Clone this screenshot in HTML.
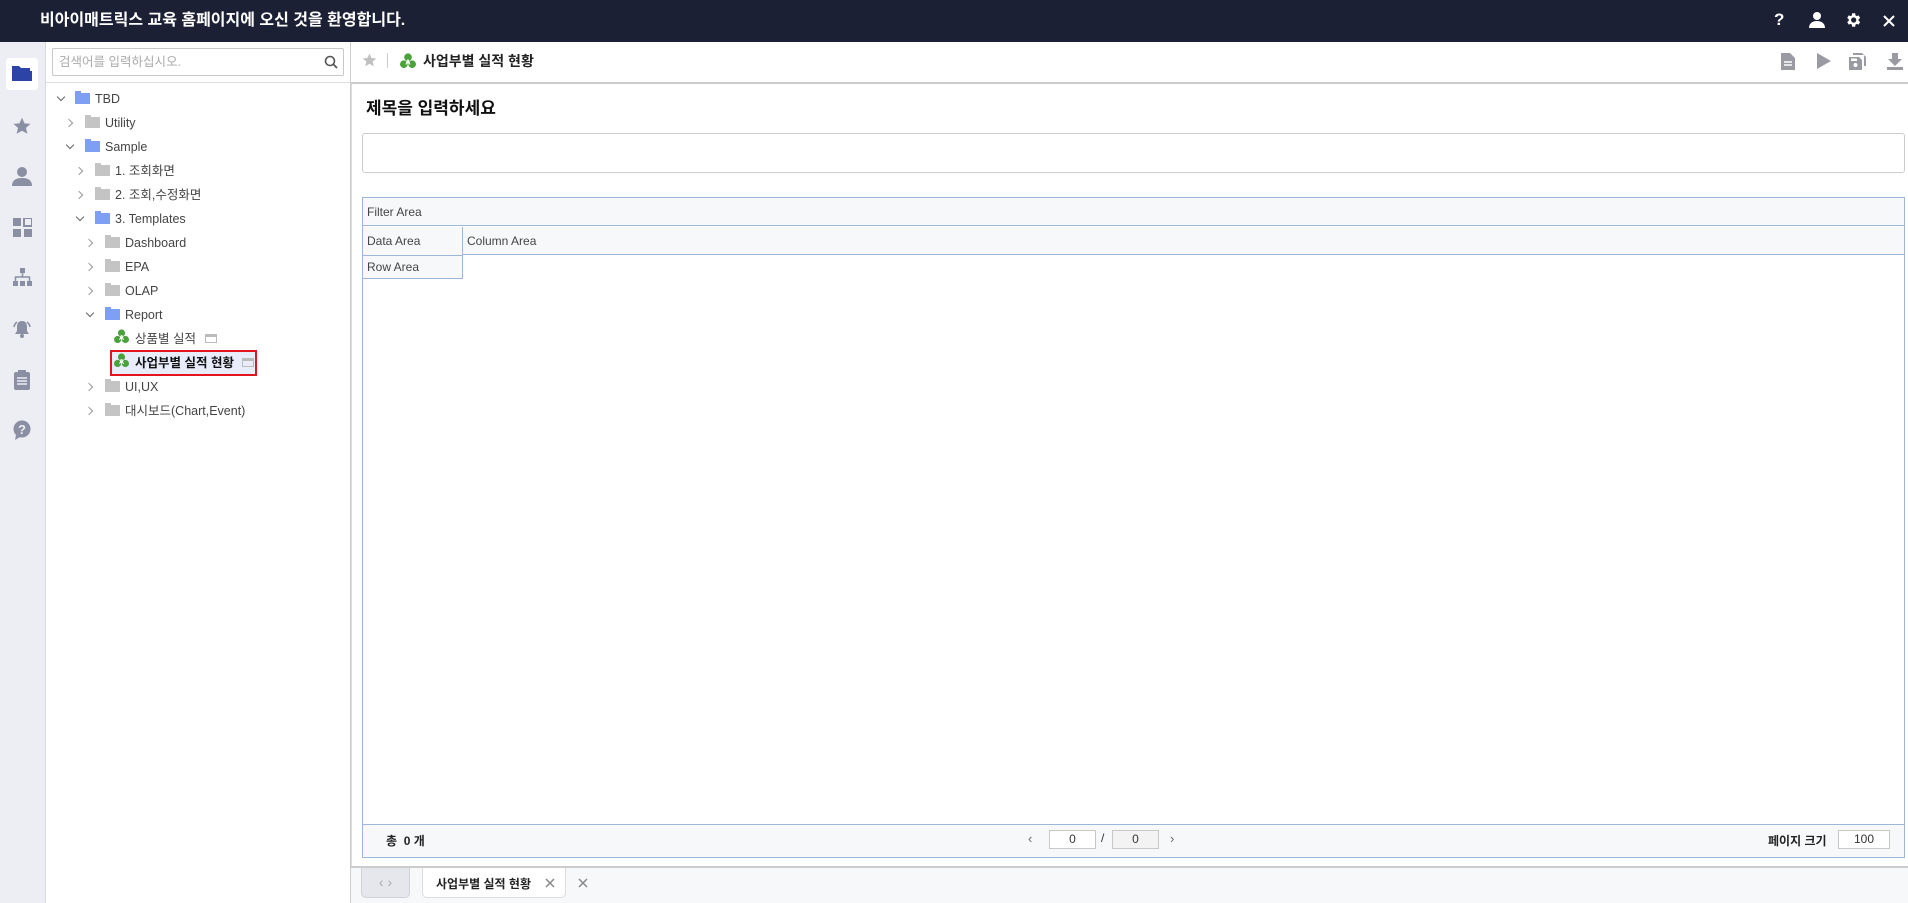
<!DOCTYPE html>
<html><head><meta charset="utf-8"><style>
*{box-sizing:border-box;margin:0;padding:0}
body{width:1908px;height:903px;overflow:hidden;background:#fff;font-family:"Liberation Sans","Noto Sans CJK KR",sans-serif;color:#333;position:relative}
.abs{position:absolute}
#hdr{left:0;top:0;width:1908px;height:42px;background:#1c2035;color:#fff;font-size:16px;font-weight:bold;line-height:42px;padding-left:40px}
#rail{left:0;top:42px;width:46px;height:861px;background:#edeef3;border-right:1px solid #d8d9de}
#tree{left:46px;top:42px;width:305px;height:861px;background:#fff;border-right:1px solid #ccc}
.ti{position:absolute;font-size:12.5px;color:#444;height:24px;line-height:24px;white-space:nowrap}
.arr{position:absolute;width:6px;height:6px;border-right:1.5px solid #666;border-bottom:1.5px solid #666}
.fold{position:absolute;width:15px;height:11px}
.fold:before{content:"";position:absolute;left:0;top:-2px;width:6px;height:3px;background:inherit}
.blue{background:#7f9ff5}.gray{background:#c4c4c4}
</style></head><body>
<div id="hdr" class="abs">비아이매트릭스 교육 홈페이지에 오신 것을 환영합니다.</div>
<div class="abs" style="left:1774px;top:10px;color:#fff;font-weight:bold;font-size:17px">?</div>
<svg class="abs" style="left:1808px;top:11px" width="18" height="18" viewBox="0 0 18 18"><circle cx="9" cy="5" r="4" fill="#fff"/><path d="M1 17c0-5 4-7 8-7s8 2 8 7z" fill="#fff"/></svg>
<svg class="abs" style="left:1844px;top:11px" width="18" height="18" viewBox="0 0 24 24"><path fill="#fff" d="M19.4 13a7.5 7.5 0 000-2l2.1-1.6-2-3.5-2.5 1a7 7 0 00-1.7-1L14.9 3h-4l-.4 2.9a7 7 0 00-1.7 1l-2.5-1-2 3.5L6.4 11a7.5 7.5 0 000 2l-2.1 1.6 2 3.5 2.5-1a7 7 0 001.7 1l.4 2.9h4l.4-2.9a7 7 0 001.7-1l2.5 1 2-3.5zM12.9 15.5a3.5 3.5 0 110-7 3.5 3.5 0 010 7z"/></svg>
<svg class="abs" style="left:1883px;top:15px" width="12" height="12"><path d="M1 1L11 11M11 1L1 11" stroke="#fff" stroke-width="2"/></svg>

<div id="rail" class="abs"></div>
<div class="abs" style="left:6px;top:58px;width:32px;height:32px;background:#fff;border-radius:4px"></div>
<svg class="abs" style="left:12px;top:65px" width="20" height="16" viewBox="0 0 20 16"><path d="M0 1h7l2 2h9v3H0z" fill="#2d43a6"/><path d="M0 6h20v10H0z" fill="#2d43a6"/></svg>
<svg class="abs" style="left:12px;top:117px" width="20" height="19" viewBox="0 0 24 24"><path fill="#8a8fa3" d="M12 1l3.2 7 7.6.7-5.8 5 1.8 7.5L12 17.3 5.2 21.2 7 13.7l-5.8-5 7.6-.7z"/></svg>
<svg class="abs" style="left:12px;top:166px" width="20" height="20" viewBox="0 0 20 20"><circle cx="10" cy="6" r="5" fill="#8a8fa3"/><path d="M0 20c0-6 4-8 10-8s10 2 10 8z" fill="#8a8fa3"/></svg>
<svg class="abs" style="left:13px;top:218px" width="19" height="19" viewBox="0 0 19 19"><rect x="0" y="0" width="8" height="8" fill="#8a8fa3"/><rect x="11" y="0" width="8" height="8" fill="none" stroke="#8a8fa3" stroke-width="2"/><rect x="0" y="11" width="8" height="8" fill="#8a8fa3"/><rect x="11" y="11" width="8" height="8" fill="#8a8fa3"/></svg>
<svg class="abs" style="left:13px;top:268px" width="19" height="18" viewBox="0 0 19 18"><rect x="7" y="0" width="5" height="5" fill="#8a8fa3"/><path d="M9.5 5v4M2.5 13V9h14v4" stroke="#8a8fa3" fill="none" stroke-width="1.5"/><rect x="0" y="13" width="5" height="5" fill="#8a8fa3"/><rect x="7" y="13" width="5" height="5" fill="#8a8fa3"/><rect x="14" y="13" width="5" height="5" fill="#8a8fa3"/></svg>
<svg class="abs" style="left:12px;top:319px" width="20" height="20" viewBox="0 0 20 20"><path d="M10 2c-4 0-5 3-5 6v4l-2 3h14l-2-3V8c0-3-1-6-5-6z" fill="#8a8fa3"/><circle cx="10" cy="17" r="2" fill="#8a8fa3"/><path d="M2 8a8 8 0 013-5M18 8a8 8 0 00-3-5" stroke="#8a8fa3" stroke-width="1.6" fill="none"/></svg>
<svg class="abs" style="left:14px;top:370px" width="16" height="20" viewBox="0 0 16 20"><rect x="0" y="2" width="16" height="18" rx="2" fill="#8a8fa3"/><rect x="4" y="0" width="8" height="4" fill="#8a8fa3"/><path d="M3 8h10M3 11h10M3 14h10" stroke="#edeef3" stroke-width="1.4"/></svg>
<svg class="abs" style="left:12px;top:420px" width="20" height="20" viewBox="0 0 20 20"><circle cx="10" cy="9" r="8.5" fill="#8a8fa3"/><path d="M4 15l-1 5 5-3z" fill="#8a8fa3"/><text x="10" y="14" font-size="13" font-weight="bold" fill="#edeef3" text-anchor="middle" font-family="Liberation Sans">?</text></svg>

<div id="tree" class="abs"></div>
<div class="abs" style="left:52px;top:48px;width:292px;height:28px;border:1px solid #c8c8c8;border-radius:2px;font-size:12.5px;color:#aaa;line-height:26px;padding-left:6px">검색어를 입력하십시오.</div>
<svg class="abs" style="left:324px;top:55px" width="14" height="14"><circle cx="6" cy="6" r="4.5" stroke="#555" stroke-width="1.6" fill="none"/><path d="M9.3 9.3L13 13" stroke="#555" stroke-width="1.8"/></svg>
<div class="abs" style="left:46px;top:82px;width:305px;height:1px;background:#ddd"></div>

<div class="arr abs" style="left:58px;top:94px;transform:rotate(45deg)"></div><div class="fold blue" style="left:75px;top:93px"></div><div class="ti" style="left:95px;top:87px">TBD</div>
<div class="arr abs" style="left:66px;top:120px;transform:rotate(-45deg);border-color:#999"></div><div class="fold gray" style="left:85px;top:117px"></div><div class="ti" style="left:105px;top:111px">Utility</div>
<div class="arr abs" style="left:67px;top:142px;transform:rotate(45deg)"></div><div class="fold blue" style="left:85px;top:141px"></div><div class="ti" style="left:105px;top:135px">Sample</div>
<div class="arr abs" style="left:76px;top:168px;transform:rotate(-45deg);border-color:#999"></div><div class="fold gray" style="left:95px;top:165px"></div><div class="ti" style="left:115px;top:159px">1. 조회화면</div>
<div class="arr abs" style="left:76px;top:192px;transform:rotate(-45deg);border-color:#999"></div><div class="fold gray" style="left:95px;top:189px"></div><div class="ti" style="left:115px;top:183px">2. 조회,수정화면</div>
<div class="arr abs" style="left:77px;top:214px;transform:rotate(45deg)"></div><div class="fold blue" style="left:95px;top:213px"></div><div class="ti" style="left:115px;top:207px">3. Templates</div>
<div class="arr abs" style="left:86px;top:240px;transform:rotate(-45deg);border-color:#999"></div><div class="fold gray" style="left:105px;top:237px"></div><div class="ti" style="left:125px;top:231px">Dashboard</div>
<div class="arr abs" style="left:86px;top:264px;transform:rotate(-45deg);border-color:#999"></div><div class="fold gray" style="left:105px;top:261px"></div><div class="ti" style="left:125px;top:255px">EPA</div>
<div class="arr abs" style="left:86px;top:288px;transform:rotate(-45deg);border-color:#999"></div><div class="fold gray" style="left:105px;top:285px"></div><div class="ti" style="left:125px;top:279px">OLAP</div>
<div class="arr abs" style="left:87px;top:310px;transform:rotate(45deg)"></div><div class="fold blue" style="left:105px;top:309px"></div><div class="ti" style="left:125px;top:303px">Report</div>
<svg class="abs" style="left:114px;top:329px" width="15" height="15" viewBox="0 0 15 15"><circle cx="7.5" cy="4" r="3.6" fill="#4aa33a"/><circle cx="3.6" cy="10.5" r="3.6" fill="#4aa33a"/><circle cx="11.4" cy="10.5" r="3.6" fill="#4aa33a"/><text x="7.5" y="11" font-size="7" fill="#fff" text-anchor="middle" font-weight="bold" font-family="Liberation Sans">A</text></svg>
<div class="ti" style="left:135px;top:327px">상품별 실적</div>
<div class="abs" style="left:205px;top:334px;width:12px;height:9px;border:1.5px solid #bbb;border-top-width:3px"></div>
<div class="abs" style="left:110px;top:350px;width:147px;height:26px;border:2px solid #e3141e;background:#e8ecfb"></div>
<svg class="abs" style="left:114px;top:353px" width="15" height="15" viewBox="0 0 15 15"><circle cx="7.5" cy="4" r="3.6" fill="#4aa33a"/><circle cx="3.6" cy="10.5" r="3.6" fill="#4aa33a"/><circle cx="11.4" cy="10.5" r="3.6" fill="#4aa33a"/><text x="7.5" y="11" font-size="7" fill="#fff" text-anchor="middle" font-weight="bold" font-family="Liberation Sans">A</text></svg>
<div class="ti" style="left:135px;top:351px;font-weight:bold;color:#111">사업부별 실적 현황</div>
<div class="abs" style="left:242px;top:358px;width:12px;height:9px;border:1.5px solid #bbb;border-top-width:3px"></div>
<div class="arr abs" style="left:86px;top:384px;transform:rotate(-45deg);border-color:#999"></div><div class="fold gray" style="left:105px;top:381px"></div><div class="ti" style="left:125px;top:375px">UI,UX</div>
<div class="arr abs" style="left:86px;top:408px;transform:rotate(-45deg);border-color:#999"></div><div class="fold gray" style="left:105px;top:405px"></div><div class="ti" style="left:125px;top:399px">대시보드(Chart,Event)</div>

<svg class="abs" style="left:362px;top:53px" width="15" height="15" viewBox="0 0 24 24"><path fill="#c0c0c0" d="M12 1l3.2 7 7.6.7-5.8 5 1.8 7.5L12 17.3 5.2 21.2 7 13.7l-5.8-5 7.6-.7z"/></svg>
<div class="abs" style="left:387px;top:53px;width:1px;height:15px;background:#ccc"></div>
<svg class="abs" style="left:400px;top:53px" width="16" height="16" viewBox="0 0 15 15"><circle cx="7.5" cy="4" r="3.6" fill="#4aa33a"/><circle cx="3.6" cy="10.5" r="3.6" fill="#4aa33a"/><circle cx="11.4" cy="10.5" r="3.6" fill="#4aa33a"/><text x="7.5" y="11" font-size="7" fill="#fff" text-anchor="middle" font-weight="bold" font-family="Liberation Sans">A</text></svg>
<div class="abs" style="left:423px;top:51px;font-size:14px;font-weight:bold;color:#222">사업부별 실적 현황</div>
<svg class="abs" style="left:1781px;top:53px" width="14" height="17"><path d="M0 0h9l5 5v12H0z" fill="#9a9aa2"/><path d="M3 9h8M3 12h8" stroke="#fff" stroke-width="1.5"/></svg>
<svg class="abs" style="left:1817px;top:53px" width="14" height="16"><path d="M0 0l14 8-14 8z" fill="#9a9aa2"/></svg>
<svg class="abs" style="left:1849px;top:53px" width="17" height="17"><path d="M4 0h9l4 4v9h-2V2H4z" fill="#9a9aa2"/><path d="M0 4h10l3 3v10H0z" fill="#9a9aa2"/><circle cx="6.5" cy="12" r="2" fill="#fff"/><rect x="2" y="5.5" width="6" height="2.5" fill="#fff"/></svg>
<svg class="abs" style="left:1887px;top:53px" width="16" height="17"><path d="M5 0h6v6h4l-7 7-7-7h4z" fill="#9a9aa2"/><rect x="0" y="14" width="16" height="3" fill="#9a9aa2"/></svg>
<div class="abs" style="left:351px;top:82px;width:1557px;height:2px;background:#ccc"></div>
<div class="abs" style="left:351px;top:84px;width:1px;height:785px;background:#ddd"></div>

<div class="abs" style="left:366px;top:94px;font-size:17px;font-weight:bold;color:#111">제목을 입력하세요</div>
<div class="abs" style="left:362px;top:133px;width:1543px;height:40px;border:1px solid #ccc;border-radius:3px"></div>

<div class="abs" style="left:362px;top:197px;width:1543px;height:661px;border:1px solid #9bb8da"></div>
<div class="abs" style="left:363px;top:198px;width:1541px;height:28px;background:#f7f8fa;border-bottom:1px solid #9bb8da;font-size:12px;color:#444;line-height:28px;padding-left:4px">Filter Area</div>
<div class="abs" style="left:363px;top:227px;width:1541px;height:28px;background:#f7f8fa;border-bottom:1px solid #9bb8da"></div>
<div class="abs" style="left:363px;top:227px;width:100px;height:52px;border-right:1px solid #9bb8da;border-bottom:1px solid #9bb8da;background:#f7f8fa"></div>
<div class="abs" style="left:363px;top:255px;width:100px;height:1px;background:#9bb8da"></div>
<div class="abs" style="left:367px;top:227px;font-size:12px;color:#444;line-height:28px">Data Area</div>
<div class="abs" style="left:467px;top:227px;font-size:12px;color:#444;line-height:28px">Column Area</div>
<div class="abs" style="left:367px;top:256px;font-size:12px;color:#444;line-height:23px">Row Area</div>
<div class="abs" style="left:363px;top:824px;width:1541px;height:33px;background:#f7f8fa;border-top:1px solid #9bb8da"></div>
<div class="abs" style="left:386px;top:832px;font-size:12px;color:#222;font-weight:bold">총 &nbsp;0 개</div>
<div class="abs" style="left:1028px;top:831px;font-size:13px;color:#666">‹</div>
<div class="abs" style="left:1049px;top:830px;width:47px;height:19px;border:1px solid #c8c8c8;background:#fff;font-size:12px;text-align:center;line-height:17px">0</div>
<div class="abs" style="left:1101px;top:831px;font-size:12px">/</div>
<div class="abs" style="left:1112px;top:830px;width:47px;height:19px;border:1px solid #c8c8c8;background:#f3f3f3;font-size:12px;text-align:center;line-height:17px">0</div>
<div class="abs" style="left:1170px;top:831px;font-size:13px;color:#666">›</div>
<div class="abs" style="left:1768px;top:832px;font-size:12px;font-weight:bold;color:#222">페이지 크기</div>
<div class="abs" style="left:1838px;top:830px;width:52px;height:19px;border:1px solid #c8c8c8;background:#fff;font-size:12px;text-align:center;line-height:17px">100</div>

<div class="abs" style="left:351px;top:866px;width:1557px;height:2px;background:#ccc"></div>
<div class="abs" style="left:351px;top:868px;width:1557px;height:35px;background:#f7f8fa"></div>
<div class="abs" style="left:361px;top:868px;width:49px;height:30px;background:#e6e7ec;border:1px solid #d0d0d5;border-top:none;border-radius:0 0 5px 5px;color:#aaa;font-size:14px;text-align:center;line-height:28px">‹ ›</div>
<div class="abs" style="left:422px;top:868px;width:144px;height:30px;background:#fff;border:1px solid #ddd;border-top:none;border-radius:0 0 5px 5px"></div>
<div class="abs" style="left:436px;top:875px;font-size:12px;font-weight:bold;color:#222">사업부별 실적 현황</div>
<svg class="abs" style="left:545px;top:878px" width="10" height="10"><path d="M1 1l8 8M9 1l-8 8" stroke="#888" stroke-width="1.5"/></svg>
<svg class="abs" style="left:578px;top:878px" width="10" height="10"><path d="M1 1l8 8M9 1l-8 8" stroke="#888" stroke-width="1.5"/></svg>
</body></html>
